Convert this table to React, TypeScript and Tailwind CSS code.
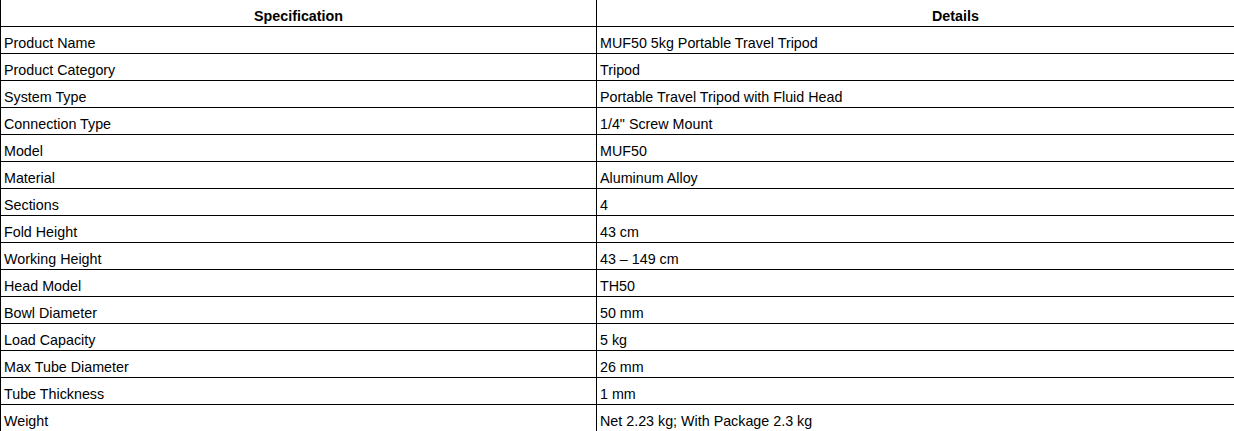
const specs: [string, string][] = [
  ['Product Name', 'MUF50 5kg Portable Travel Tripod'],
  ['Product Category', 'Tripod'],
  ['System Type', 'Portable Travel Tripod with Fluid Head'],
  ['Connection Type', '1/4" Screw Mount'],
  ['Model', 'MUF50'],
  ['Material', 'Aluminum Alloy'],
  ['Sections', '4'],
  ['Fold Height', '43 cm'],
  ['Working Height', '43 – 149 cm'],
  ['Head Model', 'TH50'],
  ['Bowl Diameter', '50 mm'],
  ['Load Capacity', '5 kg'],
  ['Max Tube Diameter', '26 mm'],
  ['Tube Thickness', '1 mm'],
  ['Weight', 'Net 2.23 kg; With Package 2.3 kg'],
];

const App = () => {
  return (
    <div
      className="w-full h-[431px] overflow-hidden bg-white text-black"
      style={{ fontFamily: '"Liberation Sans", Arial, sans-serif' }}
    >
      <table className="-mt-px w-[1315px] border-collapse table-fixed text-[14.3px] leading-4">
        <colgroup>
          <col className="w-[596px]" />
          <col />
        </colgroup>
        <thead>
          <tr>
            <th className="border border-black px-[3px] pt-[8px] pb-[2px] text-center font-bold">Specification</th>
            <th className="border border-black px-[3px] pt-[8px] pb-[2px] text-center font-bold">Details</th>
          </tr>
        </thead>
        <tbody>
          {specs.map(([label, value]) => (
            <tr key={label}>
              <td className="border border-black px-[3px] pt-[8px] pb-[2px] text-left">{label}</td>
              <td className="border border-black px-[3px] pt-[8px] pb-[2px] text-left">{value}</td>
            </tr>
          ))}
        </tbody>
      </table>
    </div>
  );
};

export default App;
